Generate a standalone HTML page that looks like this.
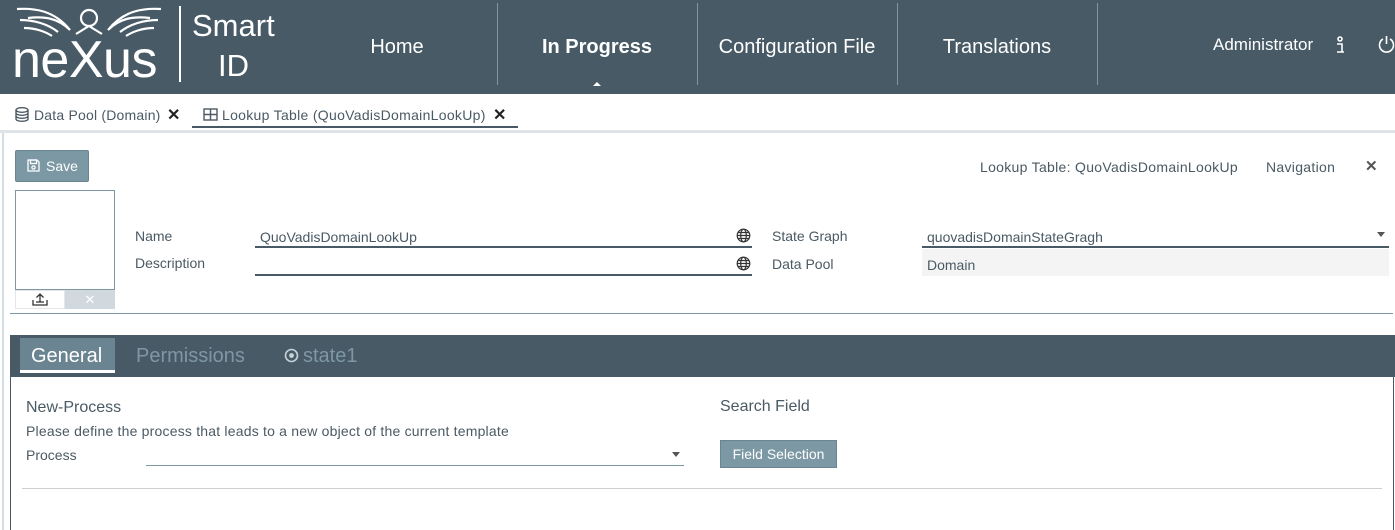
<!DOCTYPE html>
<html><head><meta charset="utf-8"><style>
*{margin:0;padding:0;box-sizing:border-box}
body{width:1395px;height:530px;overflow:hidden;background:#fff;font-family:"Liberation Sans",sans-serif;color:#4a5a64;position:relative}
.a{position:absolute;white-space:nowrap}
#hdr{position:absolute;left:0;top:0;width:1395px;height:94px;background:#475a66}
.sep{position:absolute;top:3px;width:1px;height:82px;background:#7f97a5}
.nav{position:absolute;top:36px;font-size:20px;color:#fff;text-align:center;width:200px}
.ul{position:absolute;height:1px;background:#475a66}
.lbl{font-size:14px;color:#4a5a64}
</style></head><body>
<div id="hdr">
  <svg class="a" style="left:14px;top:6px" width="150" height="36" viewBox="0 0 150 36" fill="none" stroke="#fff" stroke-width="2.2">
    <path d="M3 3 C20 2 40 4 56 24 C44 12 30 10 14 12"/><path d="M6 14 C20 14 34 18 44 26"/><path d="M10 22 C22 22 32 26 38 30"/>
    <path d="M147 3 C130 2 110 4 94 24 C106 12 120 10 136 12"/><path d="M144 14 C130 14 116 18 106 26"/><path d="M140 22 C128 22 118 26 112 30"/>
    <circle cx="75" cy="12" r="8"/><path d="M62 28 L75 20 L88 28"/>
  </svg>
  <div class="a" style="left:12px;top:30px;font-size:52px;color:#fff;letter-spacing:-0.5px">neXus</div>
  <div class="a" style="left:179px;top:6px;width:2px;height:76px;background:#fff"></div>
  <div class="a" style="left:192px;top:8px;font-size:31px;color:#fff">Smart</div>
  <div class="a" style="left:218px;top:48px;font-size:31px;color:#fff">ID</div>
  <div class="sep" style="left:497px"></div><div class="sep" style="left:697px"></div><div class="sep" style="left:897px"></div><div class="sep" style="left:1097px"></div>
  <div class="nav" style="left:297px">Home</div>
  <div class="nav" style="left:497px;font-weight:bold">In Progress</div>
  <div class="nav" style="left:697px">Configuration File</div>
  <div class="nav" style="left:897px">Translations</div>
  <div class="a" style="left:593px;top:82px;width:0;height:0;border-left:4px solid transparent;border-right:4px solid transparent;border-bottom:4px solid #fff"></div>
  <div class="a" style="left:1213px;top:35px;font-size:17px;color:#fff">Administrator</div>
  <svg class="a" style="left:1334px;top:36px" width="12" height="18" viewBox="0 0 12 18" fill="none" stroke="#fff" stroke-width="1.6"><circle cx="6" cy="3" r="2"/><path d="M3 8h5v8h2M3 16h5"/></svg>
  <svg class="a" style="left:1378px;top:35px" width="17" height="18" viewBox="0 0 17 18" fill="none" stroke="#fff" stroke-width="1.6"><path d="M5 4 A7 7 0 1 0 12 4"/><path d="M8.5 1v8"/></svg>
</div>
<svg class="a" style="left:15px;top:107px" width="14" height="15" viewBox="0 0 14 15" fill="none" stroke="#4a5a64" stroke-width="1.4"><ellipse cx="7" cy="3" rx="6" ry="2.3"/><path d="M1 3v9c0 1.3 2.7 2.3 6 2.3s6-1 6-2.3V3M1 6c0 1.3 2.7 2.3 6 2.3S13 7.3 13 6M1 9c0 1.3 2.7 2.3 6 2.3S13 10.3 13 9"/></svg>
<div class="a" style="left:34px;top:107px;font-size:14px;letter-spacing:.2px">Data Pool (Domain)</div>
<div class="a" style="left:167px;top:105px;font-size:16px;font-weight:bold;color:#222">✕</div>
<svg class="a" style="left:203px;top:108px" width="15" height="13" viewBox="0 0 15 13" fill="none" stroke="#4a5a64" stroke-width="1.4"><rect x="1" y="1" width="13" height="11"/><path d="M1 6.5h13M7.5 1v11"/></svg>
<div class="a" style="left:222px;top:107px;font-size:14px;letter-spacing:.3px">Lookup Table (QuoVadisDomainLookUp)</div>
<div class="a" style="left:493px;top:105px;font-size:16px;font-weight:bold;color:#222">✕</div>
<div class="a" style="left:192px;top:126px;width:326px;height:2px;background:#475a66"></div>
<div class="a" style="left:0;top:130px;width:1395px;height:3px;background:#dfe4e7"></div>
<div class="a" style="left:2px;top:133px;width:2px;height:397px;background:#d3dde2"></div>
<div class="a" style="left:15px;top:150px;width:74px;height:32px;background:#7b98a4;border:1px solid #6a8591;border-radius:2px"></div>
<svg class="a" style="left:27px;top:159px" width="13" height="13" viewBox="0 0 13 13" fill="none" stroke="#fff" stroke-width="1.3"><path d="M1 1h9l2 2v9H1z"/><rect x="3.5" y="1" width="6" height="3.5"/><circle cx="6.5" cy="8.5" r="1.6"/></svg>
<div class="a" style="left:46px;top:158px;font-size:14px;color:#fff">Save</div>
<div class="a lbl" style="left:980px;top:159px;letter-spacing:.3px">Lookup Table: QuoVadisDomainLookUp</div>
<div class="a lbl" style="left:1266px;top:159px;letter-spacing:.3px">Navigation</div>
<div class="a" style="left:1365px;top:157px;font-size:15px;font-weight:bold;color:#555">✕</div>
<div class="a" style="left:15px;top:190px;width:100px;height:100px;border:1px solid #7b98a4"></div>
<div class="a" style="left:15px;top:290px;width:50px;height:19px;border:1px solid #e3e7ea"></div>
<svg class="a" style="left:32px;top:292px" width="16" height="14" viewBox="0 0 16 14" fill="none" stroke="#333" stroke-width="1.3"><path d="M1 8v5h14V8M8 10V2M4.5 5.5L8 2l3.5 3.5M4 10h8"/></svg>
<div class="a" style="left:65px;top:290px;width:50px;height:19px;background:#d2d9de;text-align:center;font-size:13px;color:#fff;line-height:19px">✕</div>
<div class="a lbl" style="left:135px;top:228px">Name</div>
<div class="a lbl" style="left:135px;top:255px">Description</div>
<div class="a lbl" style="left:260px;top:229px">QuoVadisDomainLookUp</div>
<div class="ul" style="left:255px;top:246px;width:497px;height:2px"></div>
<div class="ul" style="left:255px;top:274px;width:497px;height:2px"></div>
<svg class="a" style="left:736px;top:228px" width="15" height="15" viewBox="0 0 15 15" fill="none" stroke="#333" stroke-width="1.2"><circle cx="7.5" cy="7.5" r="6.3"/><ellipse cx="7.5" cy="7.5" rx="2.8" ry="6.3"/><path d="M1.2 7.5h12.6M2 4.5h11M2 10.5h11"/></svg>
<svg class="a" style="left:736px;top:256px" width="15" height="15" viewBox="0 0 15 15" fill="none" stroke="#333" stroke-width="1.2"><circle cx="7.5" cy="7.5" r="6.3"/><ellipse cx="7.5" cy="7.5" rx="2.8" ry="6.3"/><path d="M1.2 7.5h12.6M2 4.5h11M2 10.5h11"/></svg>
<div class="a lbl" style="left:772px;top:228px">State Graph</div>
<div class="a lbl" style="left:772px;top:256px">Data Pool</div>
<div class="a lbl" style="left:927px;top:229px">quovadisDomainStateGragh</div>
<div class="ul" style="left:922px;top:246px;width:467px;height:2px"></div>
<div class="a" style="left:1377px;top:232px;border-left:4px solid transparent;border-right:4px solid transparent;border-top:5px solid #555"></div>
<div class="a" style="left:922px;top:249px;width:467px;height:27px;background:#f4f4f4"></div>
<div class="a lbl" style="left:927px;top:257px">Domain</div>
<div class="a" style="left:10px;top:313px;width:1383px;height:1px;background:#7b98a4"></div>
<div class="a" style="left:10px;top:335px;width:1385px;height:42px;background:#475a66"></div>
<div class="a" style="left:20px;top:338px;width:95px;height:35px;background:#6a8591"></div>
<div class="a" style="left:20px;top:370px;width:95px;height:3px;background:#fff"></div>
<div class="a" style="left:31px;top:345px;font-size:20px;color:#fff">General</div>
<div class="a" style="left:136px;top:345px;font-size:20px;color:#7f97a5">Permissions</div>
<svg class="a" style="left:284px;top:348px" width="15" height="15" viewBox="0 0 15 15"><circle cx="7.5" cy="7.5" r="6" fill="none" stroke="#c7d3d9" stroke-width="1.6"/><circle cx="7.5" cy="7.5" r="2.4" fill="#c7d3d9"/></svg>
<div class="a" style="left:303px;top:345px;font-size:20px;color:#7f97a5">state1</div>
<div class="a" style="left:10px;top:377px;width:1384px;height:153px;border-left:1px solid #475a66;border-right:1px solid #475a66"></div>
<div class="a" style="left:26px;top:399px;font-size:16px">New-Process</div>
<div class="a lbl" style="left:26px;top:423px;letter-spacing:.2px">Please define the process that leads to a new object of the current template</div>
<div class="a lbl" style="left:26px;top:447px">Process</div>
<div class="a" style="left:146px;top:465px;width:538px;height:1px;background:#7b98a4"></div>
<div class="a" style="left:672px;top:452px;border-left:4px solid transparent;border-right:4px solid transparent;border-top:5px solid #555"></div>
<div class="a" style="left:720px;top:398px;font-size:16px">Search Field</div>
<div class="a" style="left:720px;top:440px;width:117px;height:28px;background:#7b98a4;border:1px solid #6a8591;color:#fff;font-size:14px;text-align:center;line-height:26px">Field Selection</div>
<div class="a" style="left:22px;top:488px;width:1360px;height:1px;background:#cfcfcf"></div>
</body></html>
